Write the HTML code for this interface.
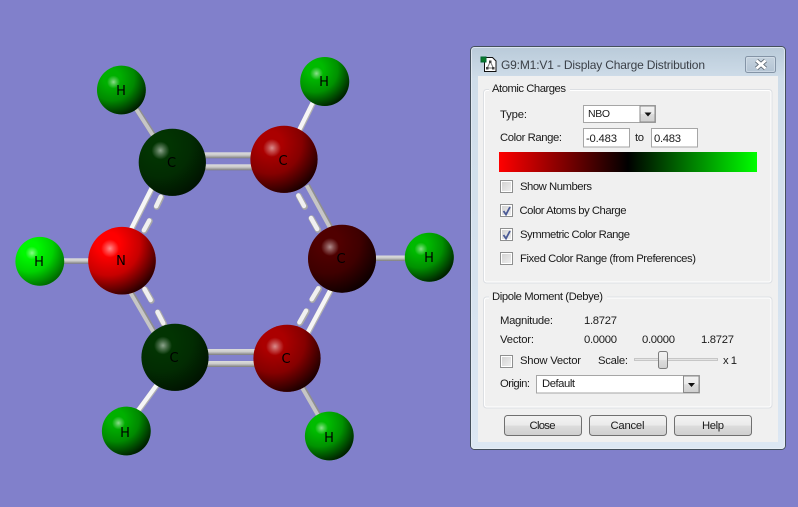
<!DOCTYPE html>
<html><head><meta charset="utf-8"><style>
html,body{margin:0;padding:0;background:#8180cb;width:798px;height:507px;overflow:hidden}
svg{display:block}
text{font-family:"Liberation Sans",sans-serif;font-size:11.3px;fill:#1a1a1a}
.lb{font-size:13px;fill:#000;text-anchor:middle;font-family:"DejaVu Sans","Liberation Sans",sans-serif}
</style></head><body>
<svg width="798" height="507" viewBox="0 0 798 507" xmlns="http://www.w3.org/2000/svg" shape-rendering="geometricPrecision">
<defs>
<radialGradient id="sh" cx=".3" cy=".25" r=".85"><stop offset=".2" stop-color="#000" stop-opacity="0"/><stop offset=".55" stop-color="#000" stop-opacity=".22"/><stop offset="1" stop-color="#000" stop-opacity=".92"/></radialGradient>
<radialGradient id="hl"><stop offset="0" stop-color="#fff" stop-opacity=".55"/><stop offset=".45" stop-color="#fff" stop-opacity=".28"/><stop offset="1" stop-color="#fff" stop-opacity="0"/></radialGradient>
<linearGradient id="hb" x1="0" y1="0" x2="0" y2="1"><stop offset="0" stop-color="#dcdcdc"/><stop offset=".45" stop-color="#cccccc"/><stop offset="1" stop-color="#7c7c7c"/></linearGradient>
<linearGradient id="frame" x1="0" y1="0" x2="0" y2="1"><stop offset="0" stop-color="#b9cad9"/><stop offset=".08" stop-color="#cfdde9"/><stop offset="1" stop-color="#dce7f3"/></linearGradient>
<linearGradient id="bar" x1="0" y1="0" x2="1" y2="0"><stop offset="0" stop-color="#ff0000"/><stop offset=".5" stop-color="#000"/><stop offset="1" stop-color="#00ff00"/></linearGradient>
<linearGradient id="btn" x1="0" y1="0" x2="0" y2="1"><stop offset="0" stop-color="#f3f3f3"/><stop offset=".48" stop-color="#ebebeb"/><stop offset=".52" stop-color="#dcdcdc"/><stop offset="1" stop-color="#cfcfcf"/></linearGradient>
<linearGradient id="cb" x1="0" y1="0" x2="1" y2="1"><stop offset="0" stop-color="#cfcfcf"/><stop offset="1" stop-color="#f2f2f2"/></linearGradient>
<linearGradient id="xb" x1="0" y1="0" x2="0" y2="1"><stop offset="0" stop-color="#c6d3df"/><stop offset="1" stop-color="#b3c3d3"/></linearGradient>
</defs>

<!-- horizontal bonds -->
<g fill="url(#hb)">
<rect x="62" y="258.300" width="30" height="5.500"/>
<rect x="374" y="255.500" width="34" height="5.500"/>
<rect x="200" y="152.300" width="56" height="6"/>
<rect x="200" y="164.300" width="56" height="6"/>
<rect x="203" y="349" width="56" height="6"/>
<rect x="203" y="361" width="56" height="6"/>
</g>
<!-- diagonal bonds: shadow + body -->
<g fill="none" stroke-linecap="butt">
<g stroke="#8f8f8f" stroke-width="5.400">
<path d="M136.700 109 154 136"/><path d="M307.300 185 331 228"/><path d="M131.200 292.500 154.500 332.500"/><path d="M302.700 387.300 319.300 416"/>
</g>
<g stroke="#c6c6c6" stroke-width="3.800">
<path d="M136.200 109.300 153.500 136.300"/><path d="M306.600 185.400 330.300 228.400"/><path d="M130.500 292.900 153.800 332.900"/><path d="M302 387.700 318.600 416.400"/>
</g>
<g stroke="#b0b0b0" stroke-width="5.600">
<path d="M152.200 188.300 131.700 229"/><path d="M313.300 102.700 299.300 131"/><path d="M157.300 385 138.300 411"/><path d="M331 290 308 333"/>
</g>
<g stroke="#f6f6f6" stroke-width="4.200">
<path d="M151.700 188 131.200 228.700"/><path d="M312.800 102.400 298.800 130.700"/><path d="M156.800 384.700 137.800 410.700"/><path d="M330.500 289.700 307.500 332.700"/>
</g>
</g>
<!-- dashes -->
<g fill="none" stroke-linecap="round" stroke="#a8a8a8" stroke-width="6.200">
<path d="M161.200 197.200 156.700 206.700"/><path d="M149.700 221 144.400 230.700"/>
<path d="M298.800 196 304.800 206.800"/><path d="M311.500 218.400 318 229.800"/>
<path d="M145 289.400 151.500 300.600"/><path d="M158 312.400 164 323.900"/>
<path d="M318.900 288.900 312.300 299.900"/><path d="M306.600 311.300 300 322.900"/>
</g>
<g fill="none" stroke-linecap="round" stroke="#f0f0f0" stroke-width="4.400">
<path d="M160.700 196.700 156.200 206.200"/><path d="M149.200 220.500 143.900 230.200"/>
<path d="M298.300 195.500 304 206"/><path d="M311 218 317.200 229"/>
<path d="M144.500 289 150.700 300"/><path d="M157.500 312 163.300 323.300"/>
<path d="M318.300 288.300 311.700 299.300"/><path d="M306 310.700 299.400 322.300"/>
</g>

<!-- atoms -->
<g>
<circle cx="121.400" cy="90" r="24.400" fill="#00b000"/><circle cx="121.400" cy="90" r="24.400" fill="url(#sh)"/><circle cx="113.500" cy="82" r="6.500" fill="url(#hl)"/>
<circle cx="39.800" cy="261.300" r="24.400" fill="#00f800"/><circle cx="39.800" cy="261.300" r="24.400" fill="url(#sh)" opacity=".7"/><circle cx="32" cy="253" r="6.500" fill="url(#hl)"/>
<circle cx="324.700" cy="81.500" r="24.500" fill="#00ba00"/><circle cx="324.700" cy="81.500" r="24.500" fill="url(#sh)"/><circle cx="316.500" cy="73.500" r="6.500" fill="url(#hl)"/>
<circle cx="429.300" cy="257.300" r="24.500" fill="#00ba00"/><circle cx="429.300" cy="257.300" r="24.500" fill="url(#sh)"/><circle cx="421" cy="249" r="6.500" fill="url(#hl)"/>
<circle cx="126.300" cy="431" r="24.400" fill="#00b000"/><circle cx="126.300" cy="431" r="24.400" fill="url(#sh)"/><circle cx="118.500" cy="423" r="6.500" fill="url(#hl)"/>
<circle cx="329.300" cy="436" r="24.400" fill="#00bc00"/><circle cx="329.300" cy="436" r="24.400" fill="url(#sh)"/><circle cx="321.500" cy="428" r="6.500" fill="url(#hl)"/>

<circle cx="172.300" cy="162.300" r="33.600" fill="#023402"/><circle cx="172.300" cy="162.300" r="33.600" fill="url(#sh)" opacity=".75"/><circle cx="160.500" cy="150.500" r="9" fill="url(#hl)"/>
<circle cx="122" cy="260.700" r="33.800" fill="#ff0000"/><circle cx="122" cy="260.700" r="33.800" fill="url(#sh)"/><circle cx="110" cy="248.500" r="9" fill="url(#hl)"/>
<circle cx="284" cy="159.300" r="33.600" fill="#ab0000"/><circle cx="284" cy="159.300" r="33.600" fill="url(#sh)"/><circle cx="272" cy="148" r="9" fill="url(#hl)"/>
<circle cx="342" cy="258.700" r="34" fill="#500000"/><circle cx="342" cy="258.700" r="34" fill="url(#sh)"/><circle cx="330" cy="247" r="9" fill="url(#hl)"/>
<circle cx="175" cy="357.300" r="33.600" fill="#023402"/><circle cx="175" cy="357.300" r="33.600" fill="url(#sh)" opacity=".75"/><circle cx="163" cy="345.500" r="9" fill="url(#hl)"/>
<circle cx="287" cy="358.300" r="33.600" fill="#ab0000"/><circle cx="287" cy="358.300" r="33.600" fill="url(#sh)"/><circle cx="275" cy="346.500" r="9" fill="url(#hl)"/>
</g>
<g>
<text class="lb" x="121" y="95">H</text>
<text class="lb" x="39" y="266">H</text>
<text class="lb" x="324" y="86">H</text>
<text class="lb" x="429" y="262">H</text>
<text class="lb" x="125" y="437">H</text>
<text class="lb" x="329" y="442">H</text>
<text class="lb" x="171.500" y="167">C</text>
<text class="lb" x="121" y="265">N</text>
<text class="lb" x="283" y="165">C</text>
<text class="lb" x="341" y="263">C</text>
<text class="lb" x="174" y="362">C</text>
<text class="lb" x="286" y="363">C</text>
</g>

<!-- dialog frame -->
<rect x="470.500" y="46.500" width="315" height="403" rx="4" fill="url(#frame)" stroke="#44505c"/>
<rect x="471.500" y="47.500" width="313" height="401" rx="3" fill="none" stroke="#e9f0f6" stroke-opacity=".7"/>
<rect x="478" y="76" width="300" height="366" fill="#f0f0f0"/>

<!-- title icon -->
<path d="M484.500 57.500h8l3.500 3.500v10.500h-11.500z" fill="#fff" stroke="#111"/>
<path d="M490.300 61.500l-3 6.500M490.300 61.500l3 6.500M487.300 68h6" stroke="#777" stroke-width="1" fill="none"/>
<g fill="#444"><rect x="489" y="60.500" width="2.500" height="2.500"/><rect x="486" y="67" width="2.500" height="2.500"/><rect x="492" y="67" width="2.500" height="2.500"/></g>
<rect x="481" y="57" width="5" height="5" fill="#0a7a2a" stroke="#063"/>
<text x="501" y="69" textLength="204" style="fill:#3a3f46;font-size:12px">G9:M1:V1 - Display Charge Distribution</text>

<!-- close -->
<rect x="745.500" y="56.500" width="30" height="16" rx="2" fill="url(#xb)" stroke="#8494a6"/>
<rect x="746.500" y="57.500" width="28" height="14" rx="1.500" fill="none" stroke="#d8e2ec" stroke-opacity=".6"/>
<path d="M756.500 60.500l9 8M765.500 60.500l-9 8" stroke="#59636e" stroke-width="4.400"/>
<path d="M756.500 60.500l9 8M765.500 60.500l-9 8" stroke="#fff" stroke-width="2.800"/>

<!-- group boxes -->
<rect x="483.500" y="89.500" width="288.500" height="193.500" rx="3" fill="#f0f0f0" stroke="#dcdfe3"/>
<rect x="484.500" y="90.500" width="286.500" height="191.500" rx="2.500" fill="none" stroke="#fff"/>
<rect x="489" y="86" width="81" height="8" fill="#f0f0f0"/>
<text x="492" y="92" textLength="74">Atomic Charges</text>

<rect x="483.500" y="297" width="288.500" height="111" rx="3" fill="#f0f0f0" stroke="#dcdfe3"/>
<rect x="484.500" y="298" width="286.500" height="109" rx="2.500" fill="none" stroke="#fff"/>
<rect x="489" y="293" width="118" height="8" fill="#f0f0f0"/>
<text x="492" y="300" textLength="111">Dipole Moment (Debye)</text>

<!-- atomic charges controls -->
<text x="500" y="118" textLength="27">Type:</text>
<rect x="583.500" y="105.500" width="72" height="17" fill="#fff" stroke="#a6a6a6"/>
<text x="588" y="117" textLength="22" style="font-size:10.500px">NBO</text>
<rect x="640" y="106" width="15" height="16" fill="url(#btn)" stroke="#8a8a8a"/>
<path d="M644.500 112.500h7l-3.500 4z" fill="#111"/>

<text x="500" y="141" textLength="62">Color Range:</text>
<rect x="583.500" y="128.500" width="46" height="18.500" fill="#fff" stroke="#a6a6a6"/>
<text x="586" y="142" textLength="31">-0.483</text>
<text x="635" y="141" textLength="9">to</text>
<rect x="651.500" y="128.500" width="46" height="18.500" fill="#fff" stroke="#a6a6a6"/>
<text x="654" y="142" textLength="27">0.483</text>

<rect x="499" y="152" width="258" height="20" fill="url(#bar)"/>

<!-- checkboxes -->
<g fill="url(#cb)" stroke="#8e8f8f">
<rect x="500.500" y="180.500" width="12" height="12"/>
<rect x="500.500" y="204.500" width="12" height="12"/>
<rect x="500.500" y="228.500" width="12" height="12"/>
<rect x="500.500" y="252.500" width="12" height="12"/>
<rect x="500.500" y="355.500" width="12" height="12"/>
</g>
<g fill="none" stroke="#fff">
<rect x="501.500" y="181.500" width="10" height="10"/>
<rect x="501.500" y="205.500" width="10" height="10"/>
<rect x="501.500" y="229.500" width="10" height="10"/>
<rect x="501.500" y="253.500" width="10" height="10"/>
<rect x="501.500" y="356.500" width="10" height="10"/>
</g>
<path d="M503.500 211l2.500 3.500 4-7.500M503.500 235l2.500 3.500 4-7.500" fill="none" stroke="#4a5a96" stroke-width="1.800"/>
<text x="520" y="190" textLength="72">Show Numbers</text>
<text x="519.500" y="214" textLength="107">Color Atoms by Charge</text>
<text x="520" y="238" textLength="110">Symmetric Color Range</text>
<text x="520" y="262" textLength="176">Fixed Color Range (from Preferences)</text>

<!-- dipole -->
<text x="500" y="324" textLength="53">Magnitude:</text>
<text x="584" y="324" textLength="33">1.8727</text>
<text x="500" y="343" textLength="34">Vector:</text>
<text x="584" y="343" textLength="33">0.0000</text>
<text x="642" y="343" textLength="33">0.0000</text>
<text x="701" y="343" textLength="33">1.8727</text>
<text x="520" y="364" textLength="61">Show Vector</text>
<text x="598" y="364" textLength="30">Scale:</text>
<rect x="634.500" y="358.500" width="83" height="2" fill="#e4e4e4" stroke="#c6c6c6" stroke-width="1"/>
<rect x="658.500" y="351.500" width="9" height="17" rx="2" fill="url(#btn)" stroke="#7c7c7c"/>
<text x="723" y="364" textLength="14">x 1</text>

<text x="500" y="387" textLength="30">Origin:</text>
<rect x="536.500" y="375.500" width="163" height="17.500" fill="#fff" stroke="#a6a6a6"/>
<text x="542" y="387" textLength="33">Default</text>
<rect x="683.500" y="376" width="15.500" height="16.500" fill="url(#btn)" stroke="#8a8a8a"/>
<path d="M688 383h7l-3.500 4z" fill="#111"/>

<!-- buttons -->
<rect x="504.500" y="415.500" width="77" height="20" rx="3" fill="url(#btn)" stroke="#707070"/>
<rect x="589.500" y="415.500" width="77" height="20" rx="3" fill="url(#btn)" stroke="#707070"/>
<rect x="674.500" y="415.500" width="77" height="20" rx="3" fill="url(#btn)" stroke="#707070"/>
<text x="529.500" y="429" textLength="26">Close</text>
<text x="610.500" y="429" textLength="34">Cancel</text>
<text x="702" y="429" textLength="22">Help</text>
</svg>
</body></html>
